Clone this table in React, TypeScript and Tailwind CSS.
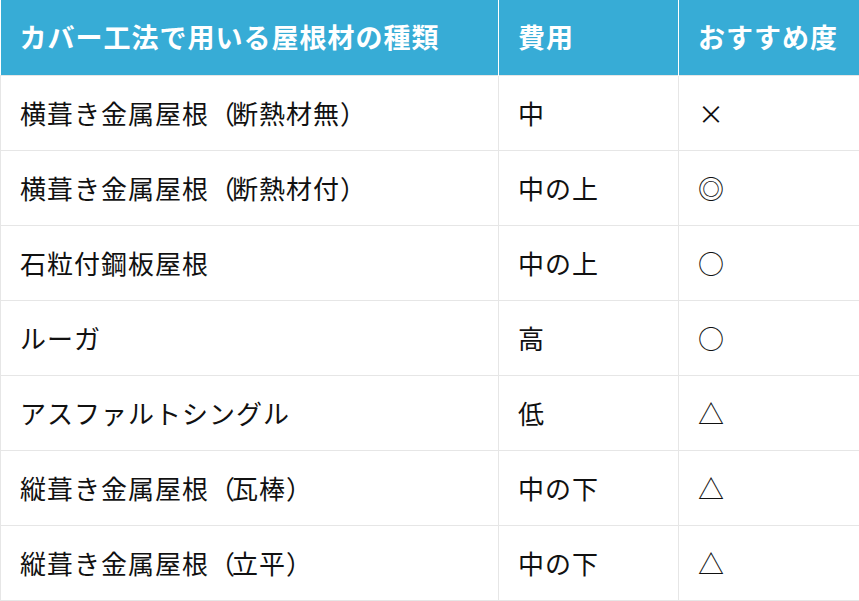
const rows = [
  { name: "横葺き金属屋根", note: "断熱材無", cost: "中", rate: "×" },
  { name: "横葺き金属屋根", note: "断熱材付", cost: "中の上", rate: "◎" },
  { name: "石粒付鋼板屋根", cost: "中の上", rate: "○" },
  { name: "ルーガ", cost: "高", rate: "○" },
  { name: "アスファルトシングル", cost: "低", rate: "△" },
  { name: "縦葺き金属屋根", note: "瓦棒", cost: "中の下", rate: "△" },
  { name: "縦葺き金属屋根", note: "立平", cost: "中の下", rate: "△" },
];

const App = () => {
  return (
    <div className="w-[859px] h-[601px] bg-white overflow-hidden font-['Noto_Sans_CJK_JP',sans-serif]">
      <table className="w-[859px] border-collapse table-fixed">
        <colgroup>
          <col className="w-[498px]" />
          <col className="w-[180px]" />
          <col className="w-[181px]" />
        </colgroup>
        <thead>
          <tr className="h-[75px] bg-[#37acd6] text-white text-[27px] font-bold tracking-[1px]">
            <th className="text-left pl-[19px] border-r border-white">カバー工法で用いる屋根材の種類</th>
            <th className="text-left pl-[19px] border-r border-white">費用</th>
            <th className="text-left pl-[19px]">おすすめ度</th>
          </tr>
        </thead>
        <tbody className="text-[26px] text-[#111] tracking-[1px]">
          {rows.map((r, i) => (
            <tr key={i} className="h-[75px]">
              <td className="pl-[19px] border border-[#e6e6e6] whitespace-nowrap">
                {r.name}
                {r.note && (
                  <>
                    <span className="tracking-[-3px]">（</span>
                    {r.note}
                    <span className="tracking-[-3px]">）</span>
                  </>
                )}
              </td>
              <td className="pl-[19px] border border-[#e6e6e6]">{r.cost}</td>
              <td className="pl-[19px] border border-[#e6e6e6]">{r.rate}</td>
            </tr>
          ))}
        </tbody>
      </table>
    </div>
  );
};

export default App;
